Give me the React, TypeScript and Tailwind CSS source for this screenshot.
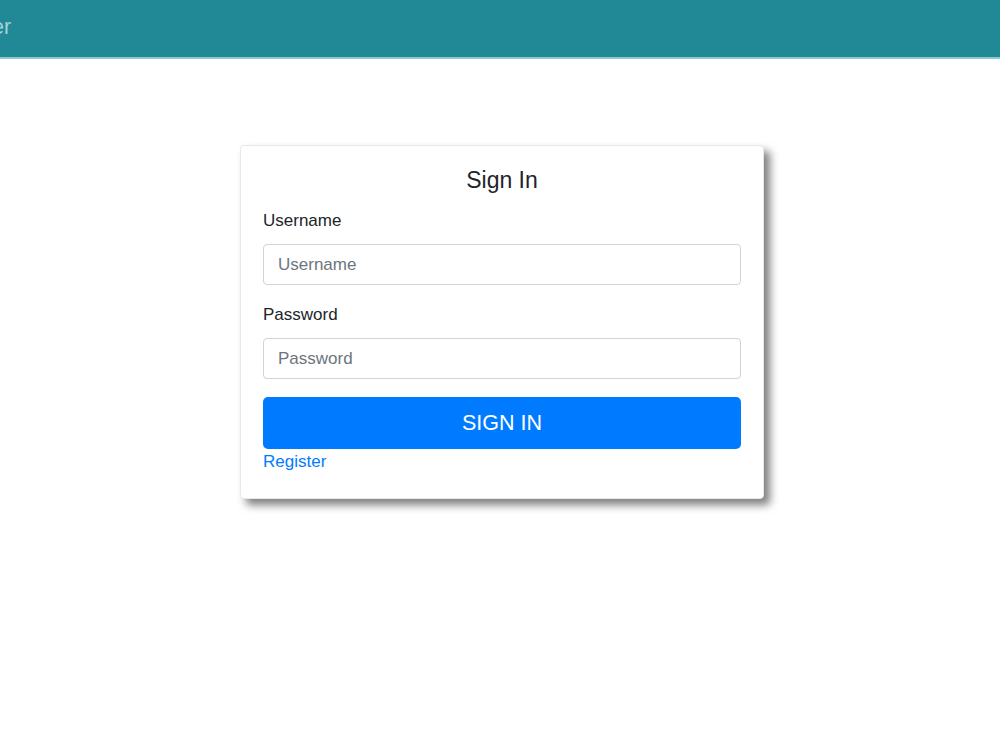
export default function App() {
  return (
    <div className="min-h-[750px] bg-white" style={{ fontFamily: '"Liberation Sans", Arial, sans-serif' }}>
      <header className="h-[59px] bg-[#218896] border-b-2 border-[#8cc9d1] flex items-center overflow-hidden">
        <span className="text-[21.5px] leading-[28px] text-[#a3d2d9] -ml-[69px] mt-[-4px] whitespace-nowrap">Explorer</span>
      </header>
      <div className="flex justify-center pt-[86px] pl-[4px]">
        <div className="w-[524px] bg-white rounded-[4px] border border-[#e8e8e8] shadow-[6px_6px_9px_rgba(0,0,0,0.5)] px-[22px] pt-[20px] pb-[24px]">
          <h4 className="text-center text-[23px] text-[#212529] leading-[28px] mb-[15px]">Sign In</h4>
          <label className="block text-[17px] text-[#212529] leading-[24px] mb-[11px]">Username</label>
          <input
            placeholder="Username"
            className="block w-full h-[41px] px-[14px] border border-[#ced4da] rounded-[4px] text-[17px] text-[#495057] placeholder:text-[#6c757d] mb-[18px] outline-none"
          />
          <label className="block text-[17px] text-[#212529] leading-[24px] mb-[11px]">Password</label>
          <input
            type="password"
            placeholder="Password"
            className="block w-full h-[41px] px-[14px] border border-[#ced4da] rounded-[4px] text-[17px] text-[#495057] placeholder:text-[#6c757d] mb-[18px] outline-none"
          />
          <button className="block w-full h-[52px] bg-[#007bff] text-white text-[21.5px] rounded-[5px]">SIGN IN</button>
          <a className="block text-[17px] text-[#007bff] leading-[24px] mt-[1px]">Register</a>
        </div>
      </div>
    </div>
  );
}
